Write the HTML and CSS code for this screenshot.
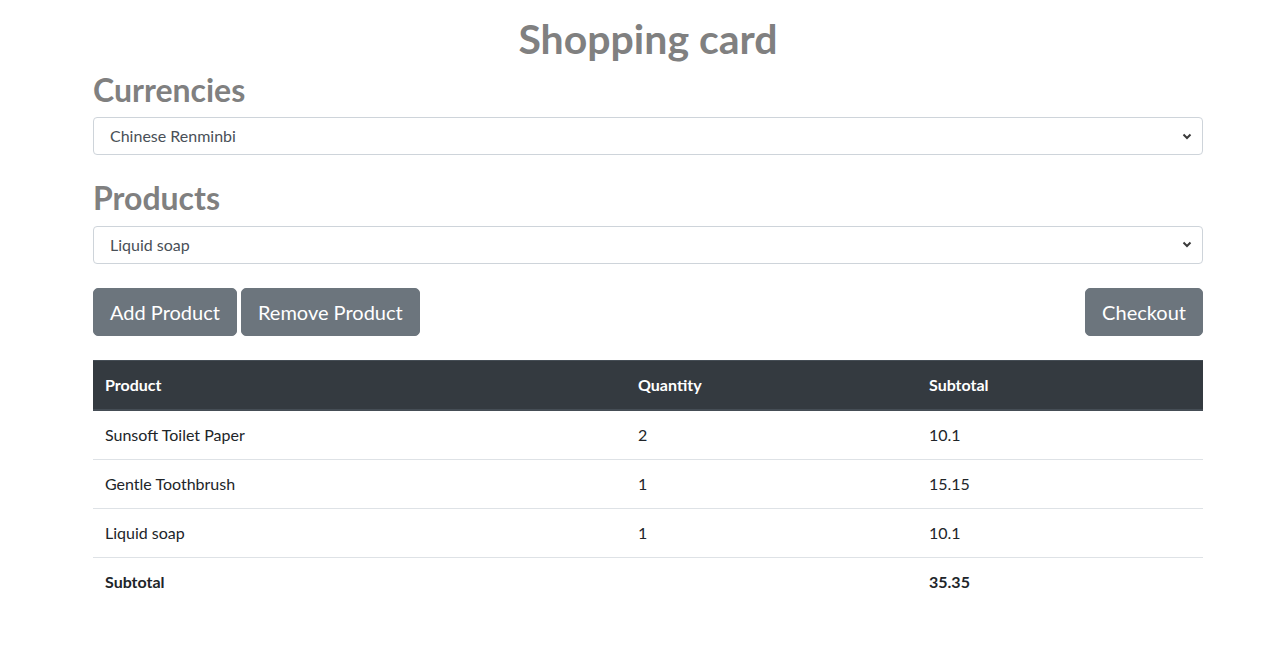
FILE: index.html
```html
<!DOCTYPE html>
<html lang="en">
<head>
<meta charset="utf-8">
<title>Shopping card</title>
<link rel="stylesheet" href="styles.css">
</head>
<body>
<div class="container">
  <h1 class="title">Shopping card</h1>
  <h2 class="section">Currencies</h2>
  <div class="select">
    <span class="select-value">Chinese Renminbi</span>
    <svg class="chevron" width="10" height="7" viewBox="0 0 10 7"><path d="M1.5 1.5 L5 5 L8.5 1.5" fill="none" stroke="#3b3b3b" stroke-width="2"/></svg>
  </div>
  <h2 class="section">Products</h2>
  <div class="select">
    <span class="select-value">Liquid soap</span>
    <svg class="chevron" width="10" height="7" viewBox="0 0 10 7"><path d="M1.5 1.5 L5 5 L8.5 1.5" fill="none" stroke="#3b3b3b" stroke-width="2"/></svg>
  </div>
  <div class="actions">
    <div class="btn-group">
      <button class="btn">Add Product</button>
      <button class="btn">Remove Product</button>
    </div>
    <button class="btn">Checkout</button>
  </div>
  <table class="cart">
    <thead>
      <tr><th class="c1">Product</th><th class="c2">Quantity</th><th class="c3">Subtotal</th></tr>
    </thead>
    <tbody>
      <tr><td>Sunsoft Toilet Paper</td><td>2</td><td>10.1</td></tr>
      <tr><td>Gentle Toothbrush</td><td>1</td><td>15.15</td></tr>
      <tr><td>Liquid soap</td><td>1</td><td>10.1</td></tr>
      <tr class="total"><td>Subtotal</td><td></td><td>35.35</td></tr>
    </tbody>
  </table>
</div>
</body>
</html>
```
FILE: styles.css
```css
* { box-sizing: border-box; }
html, body { margin: 0; padding: 0; background: #fff; }
body {
  font-family: Lato, "Open Sans", sans-serif;
  font-size: 16px;
  line-height: 1.5;
  color: #212529;
}
.container {
  width: 1110px;
  margin-left: 93px;
  padding-top: 15px;
}
.title {
  margin: 0 0 8px;
  font-size: 41px;
  font-weight: 700;
  line-height: 48px;
  color: #808080;
  text-align: center;
}
.section {
  margin: 0 0 8px;
  font-size: 32px;
  font-weight: 700;
  line-height: 1.2;
  color: #808080;
}
.select {
  height: 38px;
  border: 1px solid #ced4da;
  border-radius: 4px;
  display: flex;
  align-items: center;
  justify-content: space-between;
  padding: 0 10px 0 16px;
  margin-bottom: 24px;
  color: #495057;
}
.select-value { line-height: 24px; }
.chevron { display: block; }
.actions {
  display: flex;
  justify-content: space-between;
  margin-bottom: 24px;
}
.btn-group { display: flex; gap: 4px; }
.btn {
  font-family: inherit;
  font-size: 20px;
  line-height: 30px;
  height: 48px;
  padding: 8px 16px;
  border: 1px solid #6c757d;
  border-radius: 5px;
  background: #6c757d;
  color: #fff;
}
.cart {
  width: 1110px;
  border-collapse: collapse;
}
.cart th, .cart td {
  text-align: left;
  padding: 12px;
  line-height: 24px;
  vertical-align: top;
}
.cart thead th {
  background: #343a40;
  color: #fff;
  font-weight: 700;
  border-top: 1px solid #454d55;
  border-bottom: 2px solid #454d55;
}
.cart .c1 { width: 533px; }
.cart .c2 { width: 291px; }
.cart tbody td { border-top: 1px solid #dee2e6; }
.cart tbody tr:first-child td { border-top: none; }
.cart .total td { font-weight: 700; }
```
